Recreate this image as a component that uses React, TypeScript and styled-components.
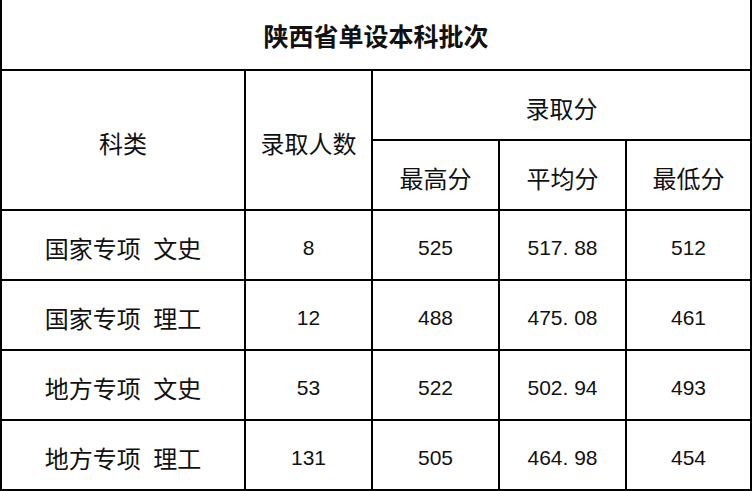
import styled, { createGlobalStyle } from "styled-components";

const GlobalStyle = createGlobalStyle`
    html, body {
        margin: 0;
        padding: 0;
        background: #ffffff;
    }
    body {
        font-family: "Liberation Sans", "Noto Sans CJK SC", sans-serif;
        color: #111111;
    }
`;

interface ScoreRow {
    category: string;
    count: number;
    max: string;
    avg: string;
    min: string;
}

const rows: ScoreRow[] = [
    { category: "国家专项 文史", count: 8, max: "525", avg: "517. 88", min: "512" },
    { category: "国家专项 理工", count: 12, max: "488", avg: "475. 08", min: "461" },
    { category: "地方专项 文史", count: 53, max: "522", avg: "502. 94", min: "493" },
    { category: "地方专项 理工", count: 131, max: "505", avg: "464. 98", min: "454" },
];

const App = () => {
    return (
        <>
            <GlobalStyle />
            <Page>
                <Table>
                    <colgroup>
                        <col style={{ width: 244 }} />
                        <col style={{ width: 127 }} />
                        <col style={{ width: 127 }} />
                        <col style={{ width: 127 }} />
                        <col style={{ width: 125 }} />
                    </colgroup>
                    <thead>
                        <tr>
                            <TitleCell colSpan={5}>陕西省单设本科批次</TitleCell>
                        </tr>
                        <tr>
                            <Cell rowSpan={2}>科类</Cell>
                            <Cell rowSpan={2}>录取人数</Cell>
                            <Cell colSpan={3}>录取分</Cell>
                        </tr>
                        <tr>
                            <Cell>最高分</Cell>
                            <Cell>平均分</Cell>
                            <Cell>最低分</Cell>
                        </tr>
                    </thead>
                    <tbody>
                        {rows.map((row) => (
                            <tr key={row.category}>
                                <CategoryCell>{row.category}</CategoryCell>
                                <Cell $numeric>{row.count}</Cell>
                                <Cell $numeric>{row.max}</Cell>
                                <Cell $numeric>{row.avg}</Cell>
                                <Cell $numeric>{row.min}</Cell>
                            </tr>
                        ))}
                    </tbody>
                </Table>
            </Page>
        </>
    );
};

export default App;

const Page = styled.div`
    width: 753px;
    height: 491px;
    overflow: hidden;
    background: #ffffff;
`;

const Table = styled.table`
    width: 751px;
    table-layout: fixed;
    border-collapse: collapse;

    tr {
        height: 70px;
    }
`;

const Cell = styled.td<{ $numeric?: boolean }>`
    border: 2px solid #000000;
    text-align: center;
    vertical-align: middle;
    padding: 5px 0 0;
    white-space: pre;
    font-weight: 400;
    font-size: ${({ $numeric }) => ($numeric ? "21px" : "24px")};
`;

const CategoryCell = styled(Cell)`
    word-spacing: 6px;
`;

const TitleCell = styled(Cell)`
    border-top: none;
    font-weight: 700;
    font-size: 25px;
    padding-top: 0;
`;
